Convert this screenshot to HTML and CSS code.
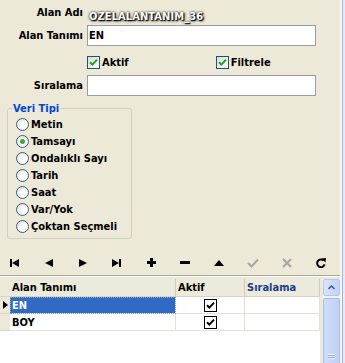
FILE: index.html
```html
<!DOCTYPE html>
<html lang="tr">
<head>
    <meta charset="UTF-8">
    <title>Özel Alan</title>
    <link rel="stylesheet" href="styles.css">
</head>
<body>
<div class="app">
    <div class="content">
        <!-- alan bilgileri -->
        <div class="fields">
            <div class="row row-name">
                <span class="lbl">Alan Adı</span>
                <span class="code">OZELALANTANIM_36</span>
            </div>
            <div class="row row-input">
                <label class="lbl" for="tanim">Alan Tanımı</label>
                <input class="txt" id="tanim" type="text" value="EN">
            </div>
            <div class="row row-checks">
                <label class="chk">
                    <span class="box"><svg width="9" height="9" viewBox="0 0 9 9"><polyline points="1,4.2 3.4,6.6 8,1.6" fill="none" stroke="#21a121" stroke-width="2"/></svg></span>Aktif
                </label>
                <label class="chk chk-filter">
                    <span class="box"><svg width="9" height="9" viewBox="0 0 9 9"><polyline points="1,4.2 3.4,6.6 8,1.6" fill="none" stroke="#21a121" stroke-width="2"/></svg></span>Filtrele
                </label>
            </div>
            <div class="row row-input">
                <label class="lbl" for="sira">Sıralama</label>
                <input class="txt" id="sira" type="text">
            </div>
        </div>

        <!-- veri tipi -->
        <fieldset class="group">
            <legend>Veri Tipi</legend>
            <div class="opt"><span class="radio"></span>Metin</div>
            <div class="opt"><span class="radio on"></span>Tamsayı</div>
            <div class="opt"><span class="radio"></span>Ondalıklı Sayı</div>
            <div class="opt"><span class="radio"></span>Tarih</div>
            <div class="opt"><span class="radio"></span>Saat</div>
            <div class="opt"><span class="radio"></span>Var/Yok</div>
            <div class="opt"><span class="radio"></span>Çoktan Seçmeli</div>
        </fieldset>

        <!-- navigator -->
        <div class="toolbar">
            <span class="tb"><svg width="10" height="8" viewBox="0 0 10 8"><rect x="0" y="0" width="2" height="8"/><polygon points="2,4 9,0 9,8"/></svg></span>
            <span class="tb"><svg width="8" height="8" viewBox="0 0 8 8"><polygon points="0,4 8,0 8,8"/></svg></span>
            <span class="tb"><svg width="8" height="8" viewBox="0 0 8 8"><polygon points="0,0 8,4 0,8"/></svg></span>
            <span class="tb"><svg width="10" height="8" viewBox="0 0 10 8"><polygon points="0,0 7,4 0,8"/><rect x="7" y="0" width="2" height="8"/></svg></span>
            <span class="tb"><svg width="9" height="9" viewBox="0 0 9 9"><rect x="3" y="0" width="3" height="9"/><rect x="0" y="3" width="9" height="3"/></svg></span>
            <span class="tb"><svg width="10" height="3" viewBox="0 0 10 3"><rect x="0" y="0" width="10" height="3"/></svg></span>
            <span class="tb"><svg width="10" height="6" viewBox="0 0 10 6"><polygon points="0,6 5,0 10,6"/></svg></span>
            <span class="tb"><svg width="12" height="10" viewBox="0 0 12 10"><polyline points="1,5 4.5,8.5 11,1.5" fill="none" stroke="#a6a6a6" stroke-width="2"/></svg></span>
            <span class="tb"><svg width="10" height="10" viewBox="0 0 10 10"><path d="M1 1 L9 9 M9 1 L1 9" stroke="#a6a6a6" stroke-width="2"/></svg></span>
            <span class="tb"><svg width="10" height="10" viewBox="0 0 10 10"><path d="M7.6 2.6 A3.8 3.8 0 1 0 8.6 6.4" fill="none" stroke="#000" stroke-width="2"/><polygon points="5.5,0.5 10,0 9.5,4.5"/></svg></span>
        </div>

        <!-- tablo -->
        <div class="grid">
            <div class="table">
                <div class="hd ind"></div>
                <div class="hd">Alan Tanımı</div>
                <div class="hd">Aktif</div>
                <div class="hd hd-blue">Sıralama</div>

                <div class="ind"><svg width="5" height="8" viewBox="0 0 5 8"><polygon points="0,0 5,4 0,8"/></svg></div>
                <div class="cell sel">EN</div>
                <div class="cell mid"><span class="gbox"><svg width="9" height="9" viewBox="0 0 9 9"><polyline points="1,4.2 3.4,6.6 8,1.6" fill="none" stroke="#000" stroke-width="2"/></svg></span></div>
                <div class="cell"></div>

                <div class="ind"></div>
                <div class="cell">BOY</div>
                <div class="cell mid"><span class="gbox"><svg width="9" height="9" viewBox="0 0 9 9"><polyline points="1,4.2 3.4,6.6 8,1.6" fill="none" stroke="#000" stroke-width="2"/></svg></span></div>
                <div class="cell"></div>
            </div>
            <div class="scroll">
                <div class="sb-up"><svg width="7" height="5" viewBox="0 0 7 5"><polyline points="0.5,4 3.5,1 6.5,4" fill="none" stroke="#4d6185" stroke-width="1.6"/></svg></div>
                <div class="sb-thumb"><span class="grip"></span></div>
            </div>
        </div>
    </div>
    <div class="edge"></div>
</div>
</body>
</html>
```
FILE: styles.css
```css
body {
    margin: 0;
    background-color: #ece9d8;
    font-family: "DejaVu Sans Condensed", "DejaVu Sans", sans-serif;
    font-stretch: condensed;
    font-size: 11px;
    font-weight: bold;
    color: #000;
    overflow: hidden;
}

.app {
    display: flex;
    width: 345px;
    height: 363px;
}

.content {
    width: 340px;
    display: flex;
    flex-direction: column;
}

.edge {
    width: 5px;
    background: linear-gradient(to right, #f7f6f2 0 2px, #9fb6e4 2px 3px, #e6ecf8 3px);
}

/* ust alanlar */
.fields {
    padding-top: 4px;
}

.row {
    display: flex;
    align-items: center;
}

.lbl {
    width: 83px;
    margin-right: 4px;
    text-align: right;
}

.row-name {
    height: 20px;
    align-items: flex-start;
}

.row-name .lbl {
    padding-top: 2px;
}

.code {
    padding-top: 6px;
    margin-left: 2px;
    color: #fff;
    letter-spacing: 0.1px;
    text-shadow: 1px 1px 1px #000, 0 0 2px #111, 1px 1px 3px #333;
}

.row-input {
    height: 21px;
    margin-top: 1px;
}

.row-input + .row-checks {
    margin-top: 4px;
}

.txt {
    width: 229px;
    height: 21px;
    box-sizing: border-box;
    border: 1px solid #9c9c9c;
    background: #fff;
    padding: 0 1px;
    font: inherit;
    color: #000;
}

.row-checks {
    height: 24px;
    padding-left: 87px;
}

.chk {
    display: flex;
    align-items: center;
    gap: 2px;
}

.chk-filter {
    margin-left: 87px;
}

.box {
    width: 13px;
    height: 13px;
    box-sizing: border-box;
    border: 1px solid #1c5180;
    background: linear-gradient(135deg, #dcdcd5, #fff);
    display: flex;
    align-items: center;
    justify-content: center;
}

/* veri tipi */
.group {
    width: 125px;
    box-sizing: border-box;
    margin: 6px 0 0 7px;
    padding: 1px 4px 3px 4px;
    border: 1px solid #d0d0bf;
    border-radius: 3px;
}

.group legend {
    padding: 0 1px;
    color: #0046d5;
    line-height: 13px;
}

.opt {
    height: 17px;
    display: flex;
    align-items: center;
    gap: 2px;
    padding-left: 4px;
}

.radio {
    width: 13px;
    height: 13px;
    box-sizing: border-box;
    border: 1px solid #3d5f86;
    border-radius: 50%;
    background: radial-gradient(circle at 65% 65%, #fff 0 30%, #dcd9cf 100%);
    display: flex;
    align-items: center;
    justify-content: center;
}

.radio.on::after {
    content: "";
    width: 5px;
    height: 5px;
    border-radius: 50%;
    background: #3ea83e;
}

/* navigator */
.toolbar {
    margin-top: 11px;
    height: 25px;
    display: flex;
    gap: 4px;
    border-bottom: 1px solid #aca899;
    box-shadow: 0 1px 0 #fff;
}

.tb {
    width: 30px;
    display: flex;
    align-items: center;
    justify-content: center;
}

/* tablo */
.grid {
    margin-top: 3px;
    flex: 1;
    display: flex;
    gap: 2px;
}

.table {
    width: 320px;
    display: grid;
    grid-template-columns: 10px 166px 69px 75px;
    grid-template-rows: 18px 17px 17px;
    align-content: start;
    background: linear-gradient(#ece9d8 0 18px, #fff 18px);
}

.hd {
    display: flex;
    align-items: center;
    padding-left: 2px;
    border-right: 1px solid #cfcbbb;
    border-bottom: 1px solid #d6d2c2;
    background: #ebeadb;
}

.hd.ind {
    padding-left: 0;
    border-right: none;
}

.hd-blue {
    color: #1e3c8c;
}

.ind {
    background: #ece9d8;
    display: flex;
    align-items: center;
    padding-left: 3px;
    border-bottom: 1px solid #d8d5c8;
}

.cell {
    display: flex;
    align-items: center;
    padding-left: 2px;
    border-right: 1px solid #e3e1d8;
    border-bottom: 1px solid #e3e1d8;
    background: #fff;
}

.cell.sel {
    background: #316ac5;
    color: #fff;
    outline: 1px dotted #8da6cf;
    outline-offset: -1px;
}

.cell.mid {
    justify-content: center;
    padding-left: 0;
}

.gbox {
    width: 13px;
    height: 13px;
    box-sizing: border-box;
    border: 1px solid #000;
    background: #fff;
    display: flex;
    align-items: center;
    justify-content: center;
}

/* kaydirma cubugu */
.scroll {
    width: 18px;
    display: flex;
    flex-direction: column;
    background: #f3f1ec;
    border-left: 1px solid #eeede5;
}

.sb-up {
    height: 17px;
    box-sizing: border-box;
    border: 1px solid #b5c7ee;
    border-radius: 2px;
    background: linear-gradient(to right, #d8e4fd, #c1d3fb);
    display: flex;
    align-items: center;
    justify-content: center;
}

.sb-thumb {
    margin-top: 2px;
    flex: 1;
    border: 1px solid #a9bfea;
    border-bottom: none;
    border-radius: 2px 2px 0 0;
    background: linear-gradient(to right, #cfdcfb, #bfd0f8);
    display: flex;
    align-items: flex-end;
    justify-content: center;
    padding-bottom: 4px;
}

.grip {
    width: 7px;
    height: 5px;
    background: repeating-linear-gradient(#eef3fe 0 1px, #8faae0 1px 2px);
}
```
